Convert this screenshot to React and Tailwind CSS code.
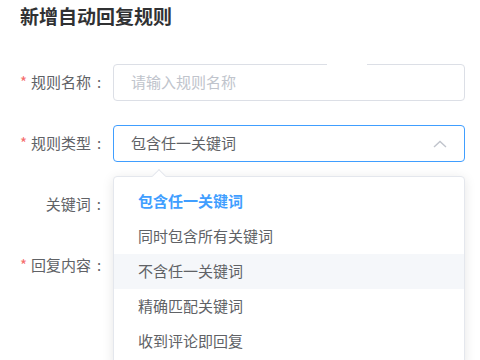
import { useState } from 'react'

const OPTIONS = ['包含任一关键词', '同时包含所有关键词', '不含任一关键词', '精确匹配关键词', '收到评论即回复']

function Label({ required, children }) {
  return (
    <div className="w-[93px] shrink-0 pr-3 text-right text-[15px] text-[#606266] whitespace-nowrap">
      {required && <span className="mr-1 text-[#f56c6c]">*</span>}
      {children}
      <span className="ml-[6px]">:</span>
    </div>
  )
}

export default function App() {
  const [selected] = useState(0)
  const [hover] = useState(2)

  return (
    <div
      className="relative w-[480px] h-[360px] overflow-hidden bg-white pl-5 pr-[15px]"
      style={{ fontFamily: '"Noto Sans CJK SC", "Noto Sans", sans-serif' }}
    >
      <h1 className="pt-[4px] text-[19px] leading-6 font-bold text-[#303133]">新增自动回复规则</h1>

      <div className="mt-9 flex flex-col gap-6">
        {/* 规则名称 */}
        <div className="flex h-[37px] items-center">
          <Label required>规则名称</Label>
          <div className="relative h-full flex-1 rounded border border-[#dcdfe6] flex items-center px-[17px]">
            <span className="text-[15px] text-[#c0c4cc]">请输入规则名称</span>
            <div className="absolute left-[213px] -top-[2px] h-[3px] w-10 bg-white" />
          </div>
        </div>

        {/* 规则类型 */}
        <div className="flex h-[37px] items-center">
          <Label required>规则类型</Label>
          <div className="h-full flex-1 rounded border border-[#409eff] flex items-center justify-between pl-[17px] pr-[17px]">
            <span className="text-[15px] text-[#606266]">{OPTIONS[selected]}</span>
            <svg width="14" height="8" viewBox="0 0 14 8" fill="none">
              <polyline points="1,7 7,1.5 13,7" stroke="#c0c4cc" strokeWidth="1.4" />
            </svg>
          </div>
        </div>

        {/* 关键词 */}
        <div className="flex h-[37px] items-center">
          <Label>关键词</Label>
        </div>

        {/* 回复内容 */}
        <div className="flex h-[37px] items-center">
          <Label required>回复内容</Label>
        </div>
      </div>

      {/* dropdown */}
      <div className="absolute left-[113px] top-[176px] w-[352px] rounded border border-[#e4e7ed] bg-white py-[7px] shadow-[0_2px_12px_rgba(0,0,0,0.1)]">
        <div className="absolute left-[40px] -top-[6px] h-[10px] w-[10px] rotate-45 border-l border-t border-[#e4e7ed] bg-white" />
        {OPTIONS.map((opt, i) => (
          <div
            key={opt}
            className={`flex h-[35px] items-center pl-6 text-[15px] ${
              i === selected ? 'font-bold text-[#409eff]' : 'text-[#606266]'
            } ${i === hover ? 'bg-[#f5f7fa]' : ''}`}
          >
            {opt}
          </div>
        ))}
      </div>
    </div>
  )
}
